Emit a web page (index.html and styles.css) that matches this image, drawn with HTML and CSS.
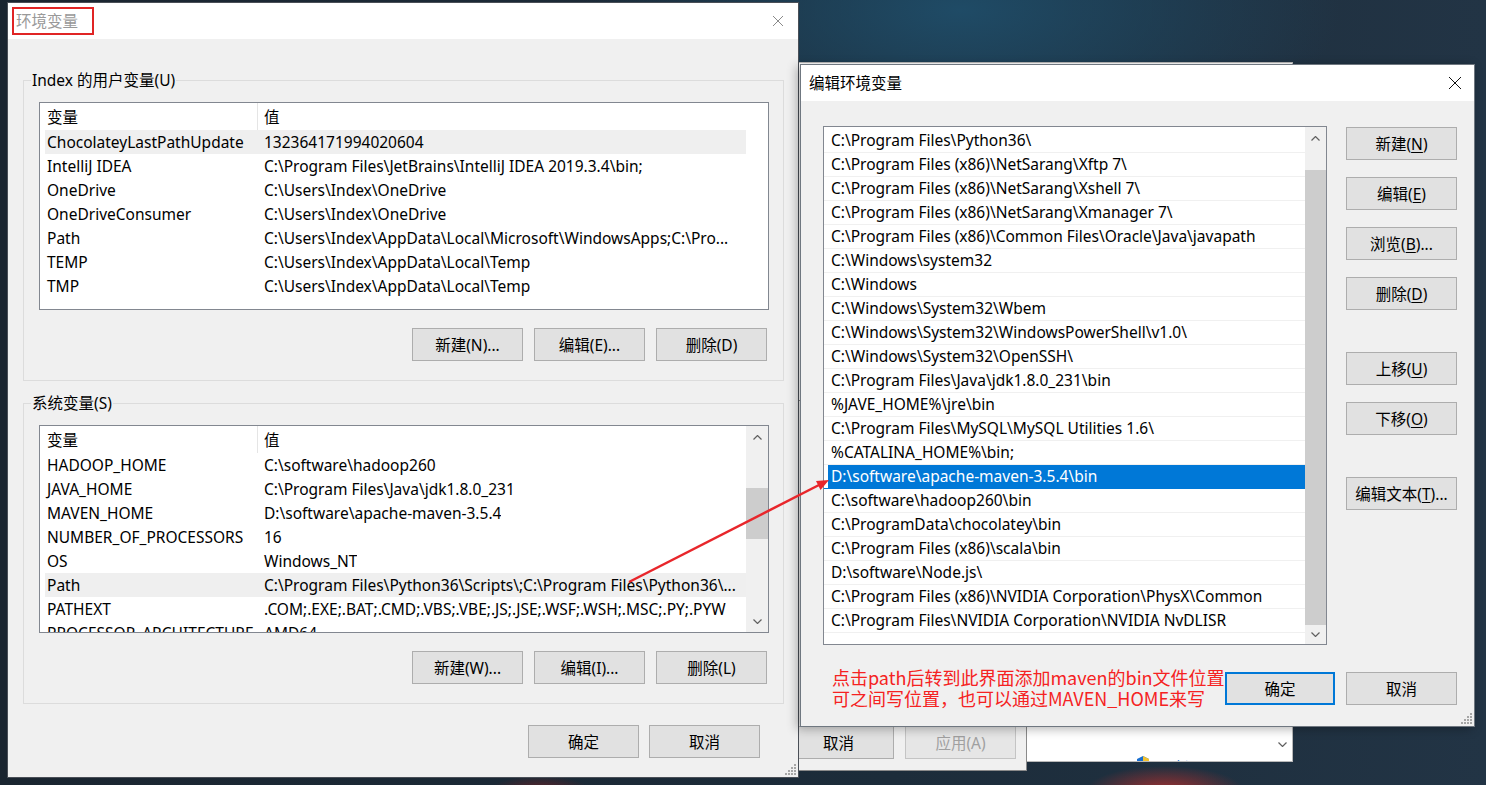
FILE: index.html
```html
<!DOCTYPE html>
<html lang="zh-CN">

<head>
  <meta charset="UTF-8">
  <title>环境变量</title>
  <link rel="stylesheet" href="styles.css">
</head>

<body>
  <div class="desktop">

    <!-- windows lying behind -->
    <div class="back-window">
      <div class="back-foot">
        <span class="shield">
          <svg width="14" height="16" viewBox="0 0 14 16"><path d="M7 0L13 3V8C13 12 10 14.5 7 16C4 14.5 1 12 1 8V3Z" fill="#1a6fd0"/><path d="M7 0L13 3V8H7Z" fill="#f2c230"/><path d="M1 8H7V16C4 14.5 1 12 1 8Z" fill="#f2c230"/></svg>
          <span class="back-link">更改设置</span>
        </span>
        <span class="back-scroll">
          <svg width="9" height="5" viewBox="0 0 9 5"><polyline points="0.5,0.5 4.5,4.5 8.5,0.5" fill="none" stroke="#606060" stroke-width="1.2"/></svg>
        </span>
      </div>
    </div>

    <div class="sys-window">
      <div class="sys-buttons">
        <button class="btn">取消</button>
        <button class="btn" disabled>应用(A)</button>
      </div>
    </div>

    <!-- 环境变量 -->
    <div class="window env-window">
      <div class="titlebar env-titlebar">
        <span class="title inactive marked">环境变量</span>
        <span class="close">
          <svg width="12" height="12" viewBox="0 0 12 12"><path d="M1 1L11 11M11 1L1 11" stroke="#8a8a8a" stroke-width="1"/></svg>
        </span>
      </div>

      <div class="env-body">
        <fieldset class="group">
          <legend>Index 的用户变量(U)</legend>
          <div class="listview">
            <div class="lv-main">
              <div class="lv-head"><span class="c1">变量</span><span class="c2">值</span></div>
              <div class="lv-row hot"><span class="c1">ChocolateyLastPathUpdate</span><span class="c2">132364171994020604</span></div>
              <div class="lv-row"><span class="c1">IntelliJ IDEA</span><span class="c2">C:\Program Files\JetBrains\IntelliJ IDEA 2019.3.4\bin;</span></div>
              <div class="lv-row"><span class="c1">OneDrive</span><span class="c2">C:\Users\Index\OneDrive</span></div>
              <div class="lv-row"><span class="c1">OneDriveConsumer</span><span class="c2">C:\Users\Index\OneDrive</span></div>
              <div class="lv-row"><span class="c1">Path</span><span class="c2">C:\Users\Index\AppData\Local\Microsoft\WindowsApps;C:\Pro...</span></div>
              <div class="lv-row"><span class="c1">TEMP</span><span class="c2">C:\Users\Index\AppData\Local\Temp</span></div>
              <div class="lv-row"><span class="c1">TMP</span><span class="c2">C:\Users\Index\AppData\Local\Temp</span></div>
            </div>
            <div class="lv-side"></div>
          </div>
          <div class="btn-row">
            <button class="btn">新建(N)...</button>
            <button class="btn">编辑(E)...</button>
            <button class="btn">删除(D)</button>
          </div>
        </fieldset>

        <fieldset class="group second">
          <legend>系统变量(S)</legend>
          <div class="listview">
            <div class="lv-main">
              <div class="lv-head"><span class="c1">变量</span><span class="c2">值</span></div>
              <div class="lv-row"><span class="c1">HADOOP_HOME</span><span class="c2">C:\software\hadoop260</span></div>
              <div class="lv-row"><span class="c1">JAVA_HOME</span><span class="c2">C:\Program Files\Java\jdk1.8.0_231</span></div>
              <div class="lv-row"><span class="c1">MAVEN_HOME</span><span class="c2">D:\software\apache-maven-3.5.4</span></div>
              <div class="lv-row"><span class="c1">NUMBER_OF_PROCESSORS</span><span class="c2">16</span></div>
              <div class="lv-row"><span class="c1">OS</span><span class="c2">Windows_NT</span></div>
              <div class="lv-row hot"><span class="c1">Path</span><span class="c2">C:\Program Files\Python36\Scripts\;C:\Program Files\Python36\...</span></div>
              <div class="lv-row"><span class="c1">PATHEXT</span><span class="c2">.COM;.EXE;.BAT;.CMD;.VBS;.VBE;.JS;.JSE;.WSF;.WSH;.MSC;.PY;.PYW</span></div>
              <div class="lv-row"><span class="c1">PROCESSOR_ARCHITECTURE</span><span class="c2">AMD64</span></div>
            </div>
            <div class="lv-side scrollbar small">
              <div class="sb-arrow">
                <svg width="9" height="5" viewBox="0 0 9 5"><polyline points="0.5,4.5 4.5,0.5 8.5,4.5" fill="none" stroke="#606060" stroke-width="1.2"/></svg>
              </div>
              <div class="sb-track"><div class="sb-thumb"></div></div>
              <div class="sb-arrow">
                <svg width="9" height="5" viewBox="0 0 9 5"><polyline points="0.5,0.5 4.5,4.5 8.5,0.5" fill="none" stroke="#606060" stroke-width="1.2"/></svg>
              </div>
            </div>
          </div>
          <div class="btn-row">
            <button class="btn">新建(W)...</button>
            <button class="btn">编辑(I)...</button>
            <button class="btn">删除(L)</button>
          </div>
        </fieldset>

        <div class="dialog-buttons">
          <button class="btn">确定</button>
          <button class="btn">取消</button>
        </div>
      </div>

      <svg class="grip" width="12" height="12" viewBox="0 0 12 12"><g fill="#a6a6a6"><rect x="9" y="0" width="2" height="2"/><rect x="6" y="3" width="2" height="2"/><rect x="9" y="3" width="2" height="2"/><rect x="3" y="6" width="2" height="2"/><rect x="6" y="6" width="2" height="2"/><rect x="9" y="6" width="2" height="2"/><rect x="0" y="9" width="2" height="2"/><rect x="3" y="9" width="2" height="2"/><rect x="6" y="9" width="2" height="2"/><rect x="9" y="9" width="2" height="2"/></g></svg>
    </div>

    <!-- 编辑环境变量 -->
    <div class="window edit-window">
      <div class="titlebar edit-titlebar">
        <span class="title">编辑环境变量</span>
        <span class="close">
          <svg width="14" height="14" viewBox="0 0 14 14"><path d="M1 1L13 13M13 1L1 13" stroke="#111" stroke-width="1"/></svg>
        </span>
      </div>

      <div class="edit-body">
        <div class="edit-top">
          <div class="pathlist">
            <div class="pl-main">
              <div class="pl-row">C:\Program Files\Python36\</div>
              <div class="pl-row">C:\Program Files (x86)\NetSarang\Xftp 7\</div>
              <div class="pl-row">C:\Program Files (x86)\NetSarang\Xshell 7\</div>
              <div class="pl-row">C:\Program Files (x86)\NetSarang\Xmanager 7\</div>
              <div class="pl-row">C:\Program Files (x86)\Common Files\Oracle\Java\javapath</div>
              <div class="pl-row">C:\Windows\system32</div>
              <div class="pl-row">C:\Windows</div>
              <div class="pl-row">C:\Windows\System32\Wbem</div>
              <div class="pl-row">C:\Windows\System32\WindowsPowerShell\v1.0\</div>
              <div class="pl-row">C:\Windows\System32\OpenSSH\</div>
              <div class="pl-row">C:\Program Files\Java\jdk1.8.0_231\bin</div>
              <div class="pl-row">%JAVE_HOME%\jre\bin</div>
              <div class="pl-row">C:\Program Files\MySQL\MySQL Utilities 1.6\</div>
              <div class="pl-row">%CATALINA_HOME%\bin;</div>
              <div class="pl-row selected">D:\software\apache-maven-3.5.4\bin</div>
              <div class="pl-row">C:\software\hadoop260\bin</div>
              <div class="pl-row">C:\ProgramData\chocolatey\bin</div>
              <div class="pl-row">C:\Program Files (x86)\scala\bin</div>
              <div class="pl-row">D:\software\Node.js\</div>
              <div class="pl-row">C:\Program Files (x86)\NVIDIA Corporation\PhysX\Common</div>
              <div class="pl-row">C:\Program Files\NVIDIA Corporation\NVIDIA NvDLISR</div>
            </div>
            <div class="scrollbar big">
              <div class="sb-arrow">
                <svg width="9" height="5" viewBox="0 0 9 5"><polyline points="0.5,4.5 4.5,0.5 8.5,4.5" fill="none" stroke="#606060" stroke-width="1.2"/></svg>
              </div>
              <div class="sb-track"><div class="sb-thumb"></div></div>
              <div class="sb-arrow">
                <svg width="9" height="5" viewBox="0 0 9 5"><polyline points="0.5,0.5 4.5,4.5 8.5,0.5" fill="none" stroke="#606060" stroke-width="1.2"/></svg>
              </div>
            </div>
          </div>

          <div class="side-buttons">
            <button class="btn">新建(<u>N</u>)</button>
            <button class="btn">编辑(<u>E</u>)</button>
            <button class="btn">浏览(<u>B</u>)...</button>
            <button class="btn">删除(<u>D</u>)</button>
            <button class="btn spaced">上移(<u>U</u>)</button>
            <button class="btn">下移(<u>O</u>)</button>
            <button class="btn spaced">编辑文本(<u>T</u>)...</button>
          </div>
        </div>

        <div class="edit-bottom">
          <div class="note">点击path后转到此界面添加maven的bin文件位置<br>可之间写位置，也可以通过MAVEN_HOME来写</div>
          <button class="btn default">确定</button>
          <button class="btn">取消</button>
        </div>
      </div>

      <svg class="grip" width="12" height="12" viewBox="0 0 12 12"><g fill="#a6a6a6"><rect x="9" y="0" width="2" height="2"/><rect x="6" y="3" width="2" height="2"/><rect x="9" y="3" width="2" height="2"/><rect x="3" y="6" width="2" height="2"/><rect x="6" y="6" width="2" height="2"/><rect x="9" y="6" width="2" height="2"/><rect x="0" y="9" width="2" height="2"/><rect x="3" y="9" width="2" height="2"/><rect x="6" y="9" width="2" height="2"/><rect x="9" y="9" width="2" height="2"/></g></svg>
    </div>

    <!-- red annotation arrow -->
    <svg class="annotation" width="1486" height="785" viewBox="0 0 1486 785">
      <line x1="629" y1="582" x2="819" y2="485" stroke="#e8262b" stroke-width="2.5"/>
      <polygon points="829,480 820.5,490 816,481" fill="#e8262b"/>
    </svg>
  </div>
</body>

</html>
```

FILE: styles.css
```css
* {
  box-sizing: border-box;
}

html,
body {
  margin: 0;
  padding: 0;
  height: 100%;
  overflow: hidden;
}

body {
  font-family: "Noto Sans", "Noto Sans CJK SC", sans-serif;
  font-size: 15.5px;
  color: #000;
}

.desktop {
  position: relative;
  width: 1486px;
  height: 785px;
  overflow: hidden;
  background:
    radial-gradient(ellipse 80px 26px at 1165px 792px, #a52f2e, transparent),
    radial-gradient(ellipse 50px 14px at 540px 790px, #5e2328, transparent),
    radial-gradient(ellipse 380px 160px at 960px 10px, #1f4b66, transparent),
    linear-gradient(90deg, #1a2530 0%, #1c2c3a 60%, #223445 100%);
}

/* ---------- generic window ---------- */

.window {
  position: absolute;
  background: #f0f0f0;
  display: flex;
  flex-direction: column;
}

.titlebar {
  height: 36px;
  flex: none;
  background: #fff;
  display: flex;
  align-items: center;
}

.title {
  line-height: 24px;
}

.title.inactive {
  color: #999;
}

.title.marked {
  border: 2px solid #e02424;
  padding: 0 14px 0 2px;
  height: 28px;
  display: flex;
  align-items: center;
}

.close {
  margin-left: auto;
  width: 40px;
  display: flex;
  justify-content: center;
}

.grip {
  position: absolute;
  right: 1px;
  bottom: 1px;
}

.btn {
  width: 111px;
  height: 33px;
  flex: none;
  padding: 0;
  background: #e1e1e1;
  border: 1px solid #adadad;
  font: inherit;
  color: #000;
}

.btn:disabled {
  color: #a0a0a0;
  background: #e6e6e6;
  border-color: #c4c4c4;
}

.btn u {
  text-underline-offset: 2px;
}

/* ---------- 环境变量 ---------- */

.env-window {
  left: 7px;
  top: 2px;
  width: 792px;
  height: 776px;
  border: 1px solid #4a4f57;
}

.env-titlebar {
  padding-left: 4px;
}

.env-body {
  padding: 31px 14px 0 15px;
  display: flex;
  flex-direction: column;
}

.group {
  margin: 0;
  min-width: 0;
  border: 1px solid #dcdcdc;
  padding: 12px 14px 19px 15px;
}

.group.second {
  margin-top: 12px;
}

.group legend {
  padding: 0 1px;
  margin-left: -8px;
  line-height: 20px;
}

.listview {
  height: 208px;
  border: 1px solid #828790;
  background: #fff;
  display: flex;
  overflow: hidden;
}

.lv-main {
  width: 706px;
  flex: none;
}

.lv-side {
  flex: 1;
}

.lv-head,
.lv-row {
  display: flex;
  align-items: center;
  margin-left: 5px;
  white-space: nowrap;
}

.lv-head {
  height: 27px;
}

.lv-row {
  height: 24px;
}

.lv-row.hot {
  background: #efefef;
}

.c1 {
  width: 213px;
  flex: none;
  padding-left: 2px;
  overflow: hidden;
}

.lv-head .c1 {
  height: 100%;
  display: flex;
  align-items: center;
  border-right: 1px solid #e5e5e5;
}

.c2 {
  padding-left: 6px;
  overflow: hidden;
}

.btn-row {
  display: flex;
  justify-content: flex-end;
  gap: 11px;
  margin-top: 18px;
  padding-right: 2px;
}

.dialog-buttons {
  display: flex;
  justify-content: flex-end;
  gap: 10px;
  margin-top: 21px;
  padding-right: 24px;
}

/* ---------- scrollbars ---------- */

.scrollbar {
  background: #f0f0f0;
  display: flex;
  flex-direction: column;
}

.sb-arrow {
  height: 22px;
  flex: none;
  display: flex;
  align-items: center;
  justify-content: center;
}

.sb-track {
  flex: 1;
}

.sb-thumb {
  background: #cdcdcd;
}

.scrollbar.small .sb-thumb {
  margin-top: 40px;
  height: 51px;
}

.scrollbar.big {
  width: 21px;
  flex: none;
}

.scrollbar.big .sb-thumb {
  margin-top: 21px;
  height: 455px;
}

.scrollbar.big .sb-arrow:last-child {
  height: 19px;
}

/* ---------- 编辑环境变量 ---------- */

.edit-window {
  left: 800px;
  top: 64px;
  width: 675px;
  height: 663px;
  border: 1px solid #6f7780;
  box-shadow: -3px 2px 10px rgba(0, 0, 0, 0.3);
}

.edit-titlebar {
  padding-left: 8px;
}

.edit-titlebar .close {
  width: 38px;
}

.edit-body {
  padding: 25px 17px 0 22px;
  display: flex;
  flex-direction: column;
}

.edit-top {
  display: flex;
  gap: 19px;
}

.pathlist {
  width: 504px;
  height: 519px;
  flex: none;
  border: 1px solid #828790;
  background: #fff;
  display: flex;
  overflow: hidden;
}

.pl-main {
  flex: 1;
  padding-top: 2px;
}

.pl-row {
  height: 24px;
  line-height: 23px;
  padding-left: 7px;
  border-bottom: 1px solid #f0f0f0;
  white-space: nowrap;
}

.pl-row.selected {
  color: #fff;
  background: linear-gradient(90deg, transparent 4px, #0078d7 4px);
  border-bottom-color: #0078d7;
}

.side-buttons {
  display: flex;
  flex-direction: column;
  gap: 17px;
  padding-top: 1px;
}

.side-buttons .spaced {
  margin-top: 25px;
}

.edit-bottom {
  display: flex;
  align-items: flex-start;
  gap: 11px;
  margin-top: 27px;
}

.note {
  flex: 1;
  min-width: 0;
  margin-top: -5px;
  padding-left: 9px;
  font-family: "Noto Sans CJK SC", sans-serif;
  font-size: 18px;
  line-height: 21px;
  color: #f52222;
  white-space: nowrap;
}

.btn.default {
  border: 2px solid #0078d7;
  width: 110px;
}

/* ---------- windows behind ---------- */

.back-window {
  position: absolute;
  left: 780px;
  top: 62px;
  width: 513px;
  height: 700px;
  background: #fff;
  border: 1px solid #b9b9b9;
  display: flex;
  flex-direction: column;
  overflow: hidden;
}

.back-foot {
  margin-top: auto;
  display: flex;
  align-items: flex-start;
  height: 34px;
}

.shield {
  margin: 29px 0 0 355px;
  display: flex;
  gap: 4px;
}

.back-link {
  color: #0066cc;
  font-size: 15px;
}

.back-scroll {
  margin: 15px 0 0 auto;
  width: 20px;
  display: flex;
  justify-content: center;
}

.sys-window {
  position: absolute;
  left: 560px;
  top: 400px;
  width: 467px;
  height: 371px;
  background: #f0f0f0;
  border: 1px solid #8a8a8a;
  display: flex;
  flex-direction: column;
  justify-content: flex-end;
}

.sys-buttons {
  display: flex;
  justify-content: flex-end;
  gap: 11px;
  padding: 0 10px 11px 0;
}

.annotation {
  position: absolute;
  left: 0;
  top: 0;
  pointer-events: none;
}
```
